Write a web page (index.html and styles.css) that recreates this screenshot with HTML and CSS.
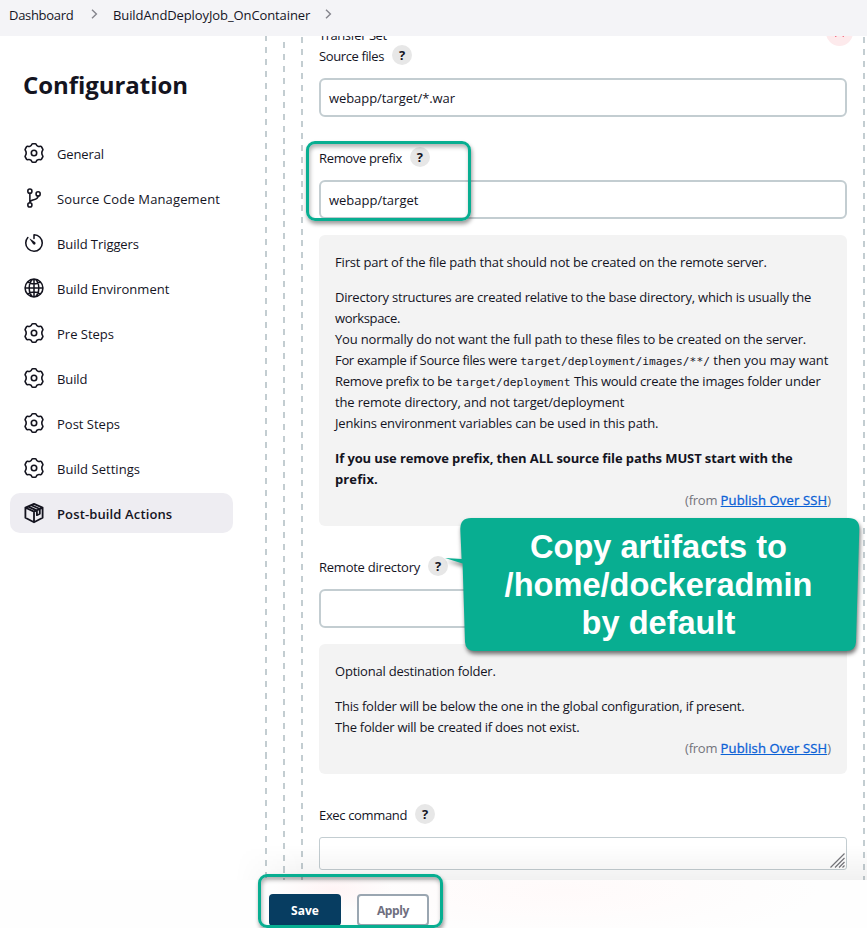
FILE: index.html
```html
<!DOCTYPE html>
<html lang="en">
<head>
<meta charset="utf-8">
<title>Configuration</title>
<link rel="stylesheet" href="styles.css">
</head>
<body>
<svg class="defs" aria-hidden="true">
  <symbol id="gear" viewBox="-11 -11 22 22">
    <g class="gear"><circle r="2.7"/><path d="M-2.100-8.700Q-1.900-9.300-1.200-9.300H1.200Q1.900-9.300 2.100-8.700C2.500-7.500 3-7 3.900-6.750C4.800-6.400 5.400-6.400 6.300-6.700Q7-6.900 7.400-6.300L8.700-4Q9.200-3.300 8.700-2.700C8-1.800 7.800-.8 7.800 0C7.800.8 8 1.800 8.700 2.700Q9.200 3.300 8.700 4L7.400 6.300Q7 6.900 6.300 6.700C5.400 6.400 4.800 6.400 3.900 6.750C3 7 2.500 7.500 2.100 8.700Q1.900 9.300 1.200 9.300H-1.200Q-1.900 9.300-2.100 8.700C-2.500 7.500-3 7-3.900 6.750C-4.800 6.400-5.400 6.400-6.300 6.700Q-7 6.900-7.400 6.300L-8.700 4Q-9.200 3.300-8.700 2.700C-8 1.800-7.800.8-7.800 0C-7.800-.8-8-1.800-8.700-2.700Q-9.200-3.300-8.700-4L-7.400-6.300Q-7-6.900-6.300-6.700C-5.400-6.400-4.800-6.400-3.900-6.750C-3-7-2.500-7.500-2.100-8.700Z"/></g>
  </symbol>
</svg>

<header class="crumbs">
  <a class="c-dash">Dashboard</a>
  <svg class="chev" viewBox="0 0 7 10"><path d="M1 .8 5.4 5 1 9.2"/></svg>
  <a class="c-job">BuildAndDeployJob_OnContainer</a>
  <svg class="chev" viewBox="0 0 7 10"><path d="M1 .8 5.4 5 1 9.2"/></svg>
</header>

<div class="page">
  <aside class="side">
    <h1>Configuration</h1>
    <nav>
      <a class="item"><svg class="ico"><use href="#gear"/></svg><span class="n1">General</span></a>
      <a class="item"><svg class="ico" viewBox="0 0 512 512"><g class="st"><circle cx="160" cy="96" r="48"/><circle cx="160" cy="416" r="48"/><circle cx="352" cy="160" r="48"/><path d="M160 368V144M352 208c0 128-192 48-192 160"/></g></svg><span class="n2">Source Code Management</span></a>
      <a class="item"><svg class="ico" viewBox="0 0 512 512"><path class="st" d="M112.91 128A191.85 191.85 0 0064 254c-1.18 106.35 85.65 193.8 192 194 106.2.2 192-85.83 192-192 0-104.54-83.55-189.61-187.5-192a4.36 4.36 0 00-4.5 4.37V152"/><path d="M233.38 278.63l-79-113a8.13 8.13 0 0111.32-11.32l113 79a32.5 32.5 0 01-37.25 53.26 33.21 33.21 0 01-8.07-7.94z"/></svg><span class="n3">Build Triggers</span></a>
      <a class="item"><svg class="ico" viewBox="0 0 512 512"><path class="st" d="M256 48C141.13 48 48 141.13 48 256s93.13 208 208 208 208-93.13 208-208S370.87 48 256 48zM256 48c-58.07 0-112.67 93.13-112.67 208S197.93 464 256 464s112.67-93.13 112.67-208S314.07 48 256 48zM117.33 117.33c38.24 27.15 86.38 43.34 138.67 43.34s100.43-16.19 138.67-43.34M394.67 394.67c-38.24-27.15-86.38-43.34-138.67-43.34s-100.43 16.19-138.67 43.34M256 48v416M464 256H48"/></svg><span>Build Environment</span></a>
      <a class="item"><svg class="ico"><use href="#gear"/></svg><span>Pre Steps</span></a>
      <a class="item"><svg class="ico"><use href="#gear"/></svg><span class="n1">Build</span></a>
      <a class="item"><svg class="ico"><use href="#gear"/></svg><span>Post Steps</span></a>
      <a class="item"><svg class="ico"><use href="#gear"/></svg><span class="n4">Build Settings</span></a>
      <a class="item active"><svg class="ico cube" viewBox="0 0 22 22"><path d="M11 1.900 19.600 5.600V15.800L11 20.300 2.400 15.800V5.600ZM2.600 5.800 11 9.600 19.400 5.800M11 9.600V20M5.300 4.600l8.400 3.800M8.300 3.200l8.600 3.800M13.900 8.600v4.600l2.900-1.500V7.200"/></svg><span class="n2">Post-build Actions</span></a>
    </nav>
  </aside>

  <main class="level l1"><div class="level l2"><div class="level l3">
    <form class="form">
      <div class="set"><span>Transfer Set</span><svg class="del" viewBox="0 0 27 27"><circle cx="13.5" cy="13.5" r="13.5"/><path d="m9.3 9.3 8.4 8.4m0-8.4-8.4 8.4"/></svg></div>
      <div class="label"><span class="f1">Source files</span><i class="q">?</i></div>
      <div class="input"><span class="v1">webapp/target/*.war</span></div>

      <div class="label next framed"><span class="f2">Remove prefix</span><i class="q">?</i><b class="frame mark"></b></div>
      <div class="input"><span>webapp/target</span></div>
      <div class="help">
        <p><span class="h1">First part of the file path that should not be created on the remote server.</span></p>
        <p><span class="h2">Directory structures are created relative to the base directory, which is usually the</span><br>
          <span class="h3">workspace.</span><br>
          <span class="h4">You normally do not want the full path to these files to be created on the server.</span><br>
          <span class="h5">For example if Source files were</span> <code>target/deployment/images/**/</code> <span class="h6">then you may want</span><br>
          <span class="h7">Remove prefix to be</span> <code>target/deployment</code> <span class="h11">This would create the images folder under</span><br>
          <span class="h8">the remote directory, and not target/deployment</span><br>
          <span class="h1">Jenkins environment variables can be used in this path.</span></p>
        <p class="strong"><span class="h9">If you use remove prefix, then ALL source file paths MUST start with the</span><br><span class="h10">prefix.</span></p>
        <div class="from"><span class="h7">(from</span> <a>Publish Over SSH</a>)</div>
      </div>

      <div class="label next"><span class="f3">Remote directory</span><i class="q">?</i></div>
      <div class="input"></div>
      <div class="help">
        <p><span class="h2">Optional destination folder.</span></p>
        <p><span class="h2">This folder will be below the one in the global configuration, if present.</span><br>
          <span class="h7">The folder will be created if does not exist.</span></p>
        <div class="from"><span class="h7">(from</span> <a>Publish Over SSH</a>)</div>
      </div>

      <div class="label next"><span class="f2">Exec command</span><i class="q">?</i></div>
      <div class="area"><svg class="grip" viewBox="0 0 15 15"><path d="M.5 14.5l14-14M5 14.5l9.500-9.500M9 14.500l5.500-5.500M12.500 14.500l2-2"/></svg></div>
    </form>
  </div></div></main>
</div>

<div class="fade"></div>
<footer class="bar">
  <button class="btn save">Save</button>
  <button class="btn apply">Apply</button>
  <b class="frame buttons"></b>
</footer>

<div class="callout">
  <svg viewBox="0 0 416 134"><path d="M26 0H403.500Q414.500 0 414.300 11L411 124Q410.500 133 401 133H30Q20.500 133 20 124L17.600 45.500 0 40 16.600 41 15.300 11Q15.300 0 26 0Z"/></svg>
  <div class="msg">Copy artifacts to<br>/home/dockeradmin<br>by default</div>
</div>
</body>
</html>
```
FILE: styles.css
```css
* { box-sizing: border-box; }
html, body { height: 928px; overflow: hidden; }
body {
  margin: 0;
  position: relative;
  background: #fff;
  color: #14141f;
  font: 13px/21px "Open Sans", "Noto Sans", sans-serif;
}
.defs { position: absolute; width: 0; height: 0; }
.st { fill: none; stroke: #14141f; stroke-width: 36; stroke-linecap: round; stroke-linejoin: round; }
.gear { fill: none; stroke: #14141f; stroke-width: 1.6; stroke-linejoin: round; }

.crumbs {
  position: relative;
  z-index: 2;
  display: flex;
  align-items: center;
  height: 36px;
  padding: 0 0 6px 9px;
  background: #f4f4f7;
}
.c-dash { width: 82px; letter-spacing: -.3px; }
.c-job { width: 212px; margin-left: 15px; letter-spacing: -.1px; }
.chev { width: 7px; height: 10px; fill: none; stroke: #85858d; stroke-width: 1.4; margin-top: -2px; }

.page { display: grid; grid-template-columns: 265px 1fr; height: 844px; overflow: hidden; }
.side { padding: 31px 32px 0 10px; }
h1 { margin: 0 0 31px 13px; font-size: 24px; line-height: 35px; font-weight: 700; letter-spacing: -.05px; }
nav { display: grid; gap: 5px; }
.item { display: flex; align-items: center; gap: 12px; height: 40px; padding-left: 13px; border-radius: 10px; }
.item span { padding-top: 2px; }
.active { background: #eeedf2; font-weight: 600; }
.ico { width: 22px; height: 22px; flex: none; fill: #14141f; }
.cube { fill: none; stroke: #14141f; stroke-width: 1.8; stroke-linejoin: round; }
.n1 { letter-spacing: -.12px; }
.n2 { letter-spacing: .13px; }
.n3 { letter-spacing: -.07px; }
.n4 { letter-spacing: .04px; }

.level {
  padding-left: 18px;
  background: repeating-linear-gradient(#c3cdd1 0 6px, transparent 6px 11.95px) 0 var(--o) / 2px 1000px no-repeat;
}
.l1 { --o: -.5px; }
.l2 { --o: -6px; }
.l3 {
  display: flex;
  flex-direction: column;
  height: 844px;
  width: 564px;
  padding-right: 18px;
  background:
    repeating-linear-gradient(#c3cdd1 0 6px, transparent 6px 11.97px) 0 1px / 2px 1000px no-repeat,
    repeating-linear-gradient(#c3cdd1 0 6px, transparent 6px 11.98px) 100% 1px / 2px 1000px no-repeat;
}
.form { margin-top: -11px; display: flex; flex-direction: column; }
.set { display: flex; justify-content: space-between; height: 21px; letter-spacing: -.48px; }
.del { width: 27px; height: 27px; margin: -6px -6px 0 0; fill: #fdeaec; }
.del path { stroke: #f0506a; stroke-width: 1.2; }
.label { display: flex; gap: 8px; height: 21px; margin-bottom: 11px; }
.next { margin-top: 31px; }
.q {
  width: 20px; height: 20px; margin-top: -1px; border-radius: 50%;
  background: #e7e7e7; font: 700 13px/20px "Open Sans", sans-serif; text-align: center;
}
.input {
  height: 39px; padding: 8px 8px 6px; border: 2px solid #c3cdd1; border-radius: 6px; background: #fff;
}
.f1 { letter-spacing: -.38px; }
.f2 { letter-spacing: -.34px; }
.f3 { letter-spacing: -.24px; }
.v1 { letter-spacing: -.07px; }
.help { margin-top: 16px; padding: 17px 16px 15px; background: #f3f3f3; border-radius: 6px; white-space: nowrap; }
.help p { margin: 0 0 14px; }
.help p:nth-last-child(2) { margin-bottom: 0; }
.strong { font-weight: 700; }
code { font: 11.25px/1 "DejaVu Sans Mono", monospace; }
.from { text-align: right; color: #73737c; }
.from a { color: #0b61d6; -webkit-text-stroke: .3px #0b61d6; letter-spacing: .14px; text-decoration: underline; }
.h1 { letter-spacing: -.18px; }
.h2 { letter-spacing: -.22px; }
.h3 { letter-spacing: -.34px; }
.h4 { letter-spacing: -.16px; }
.h5 { letter-spacing: -.33px; }
.h6 { letter-spacing: -.06px; }
.h7 { letter-spacing: -.25px; }
.h8 { letter-spacing: -.15px; }
.h9 { letter-spacing: -.11px; }
.h10 { letter-spacing: .12px; }
.h11 { letter-spacing: -.22px; }
.area {
  display: flex; justify-content: flex-end; align-items: flex-end;
  height: 33px; padding: 1px; border: 1px solid #c3cdd1; border-radius: 3px;
}
.grip { width: 15px; height: 15px; fill: none; stroke: #77777c; stroke-width: 1.2; }

.fade {
  position: absolute; left: 0; right: 0; top: 845px; height: 35px;
  background: linear-gradient(rgba(0,0,0,0), rgba(0,0,0,.055));
  -webkit-mask-image: linear-gradient(90deg, transparent 235px, #000 300px);
  mask-image: linear-gradient(90deg, transparent 235px, #000 300px);
}
.bar {
  position: relative;
  display: flex; gap: 16px; height: 48px; padding: 14px 0 0 269px;
  background:
    radial-gradient(ellipse 60px 22px at 333px 10px, #fff4f5, transparent),
    radial-gradient(ellipse 260px 50px at 560px 12px, #fffafa, transparent),
    #fefefe;
}
.btn { width: 72px; height: 32px; padding: 2px 0 0; border-radius: 4px; font: 700 12px/1 "Open Sans", sans-serif; }
.save { background: #073d61; color: #fff; border: 0; }
.apply { background: #fff; color: #6f6f80; border: 2px solid #9aa6b1; letter-spacing: -.35px; }

.frame {
  position: absolute; border: 3px solid #08ae91; border-radius: 9px;
  box-shadow: 1px 3px 4px rgba(0,0,0,.4), inset 1px 3px 4px rgba(0,0,0,.3);
}
.framed { position: relative; }
.mark { left: -13px; top: -7px; width: 165px; height: 80px; }
.buttons { left: 258px; top: -6px; width: 185px; height: 54px; }

.callout { position: absolute; left: 445px; top: 518px; width: 416px; height: 134px; }
.callout svg { display: block; width: 416px; height: 134px; fill: #08ae91; overflow: visible; filter: drop-shadow(1px 3px 2px rgba(0,0,0,.55)); }
.msg {
  position: absolute; left: 15px; right: 4px; top: 10px;
  color: #fff; text-align: center; font: 700 32.6px/38px "Liberation Sans", sans-serif;
}
```
